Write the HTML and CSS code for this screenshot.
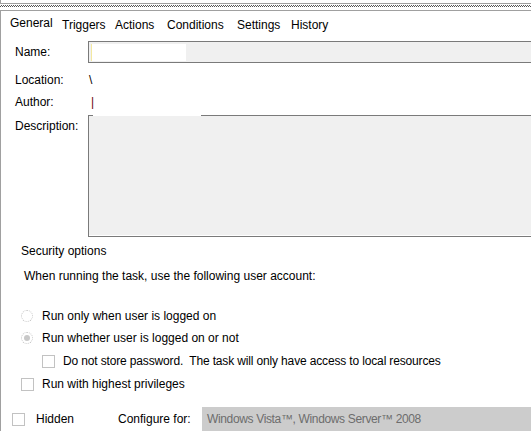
FILE: index.html
```html
<!DOCTYPE html>
<html>
<head>
<meta charset="utf-8">
<link rel="stylesheet" href="styles.css">
</head>
<body>
<div class="splitter">
  <div class="sp-a"></div>
  <div class="sp-b"></div>
  <div class="sp-c"></div>
  <div class="sp-d"></div>
  <div class="sp-e"></div>
</div>
<div class="panel">
  <div class="tabs">
    <div class="tab tab-active">General</div>
    <div class="tab t2">Triggers</div>
    <div class="tab t3">Actions</div>
    <div class="tab t4">Conditions</div>
    <div class="tab t5">Settings</div>
    <div class="tab t6">History</div>
  </div>
  <div class="form">
    <div class="row row-name">
      <div class="label">Name:</div>
      <div class="namebox"><div class="redact"></div></div>
    </div>
    <div class="row row-loc">
      <div class="label">Location:</div>
      <div class="value">\</div>
    </div>
    <div class="row row-author">
      <div class="label">Author:</div>
      <div class="value author">|</div>
    </div>
    <div class="row row-desc">
      <div class="label desc-label">Description:</div>
      <div class="descbox"></div>
    </div>
  </div>
  <div class="security">
    <div class="sec-title">Security options</div>
    <div class="sec-account">When running the task, use the following user account:</div>
    <div class="opt opt-r1"><span class="radio"></span><span>Run only when user is logged on</span></div>
    <div class="opt opt-r2"><span class="radio radio-on"></span><span>Run whether user is logged on or not</span></div>
    <div class="opt opt-c1"><span class="check"></span><span class="tight">Do not store password.&nbsp; The task will only have access to local resources</span></div>
    <div class="opt opt-c2"><span class="check"></span><span>Run with highest privileges</span></div>
  </div>
  <div class="bottom">
    <span class="check"></span>
    <span class="hidden-label">Hidden</span>
    <span class="cfg-label">Configure for:</span>
    <div class="combo">Windows Vista™, Windows Server™ 2008</div>
  </div>
</div>
</body>
</html>
```

FILE: styles.css
```css
html, body {
  margin: 0;
  padding: 0;
  background: #ffffff;
}
body {
  width: 531px;
  height: 431px;
  overflow: hidden;
  font-family: "Liberation Sans", Arial, sans-serif;
  font-size: 12px;
  line-height: 14px;
  color: #000;
}
.splitter {
  display: flex;
  flex-direction: column;
}
.sp-a {
  height: 3px;
  border-left: 1px solid #a0a0a0;
}
.sp-b {
  height: 1px;
  background: #a0a0a0;
}
.sp-c {
  height: 1px;
}
.sp-d {
  height: 2px;
  background: repeating-conic-gradient(#555 0 25%, #fff 0 50%) 0 0 / 2px 2px;
}
.sp-e {
  height: 3px;
}
.panel {
  border-top: 1px solid #a0a0a0;
  border-left: 1px solid #a0a0a0;
  height: 430px;
}
.tabs {
  display: flex;
  padding-left: 9px;
  padding-top: 5px;
  height: 21px;
}
.tab {
  padding-top: 2px;
  white-space: nowrap;
  flex: none;
}
.tab-active {
  padding-top: 0;
  width: 52px;
}
.t2 { width: 53px; }
.t3 { width: 52px; }
.t4 { width: 70px; }
.t5 { width: 54px; }
.form {
  padding-left: 14px;
  display: flex;
  flex-direction: column;
}
.row {
  display: flex;
  align-items: center;
}
.label {
  width: 73px;
  flex: none;
}
.row-name {
  margin-top: 4px;
  height: 22px;
}
.namebox {
  flex: none;
  box-sizing: border-box;
  width: 460px;
  height: 22px;
  border: 1px solid #7a7a7a;
  background: #f0f0f0;
  padding: 2px 0 0 2px;
}
.redact {
  width: 95px;
  height: 17px;
  background: #fff;
  border-left: 1px solid #f3e8a0;
  box-sizing: border-box;
}
.row-loc {
  margin-top: 10px;
}
.value {
  padding-left: 1px;
}
.author {
  color: #6a0010;
  padding-left: 3px;
}
.row-author {
  margin-top: 8px;
}
.row-desc {
  margin-top: 6px;
  align-items: flex-start;
}
.desc-label {
  padding-top: 4px;
}
.descbox {
  flex: none;
  box-sizing: border-box;
  width: 460px;
  height: 122px;
  border: 1px solid #7a7a7a;
  border-top: none;
  background:
    linear-gradient(to right, #7a7a7a 0 4px, #ffffff 4px 112px, #7a7a7a 112px) top left / 100% 1px no-repeat,
    #f0f0f0;
  box-shadow: inset 0 -1px 0 #ffffff;
}
.security {
  display: flex;
  flex-direction: column;
  padding-left: 20px;
}
.sec-title {
  margin-top: 7px;
}
.sec-account {
  margin-top: 11px;
  padding-left: 3px;
}
.opt {
  display: flex;
  align-items: center;
  height: 14px;
  white-space: nowrap;
}
.opt-r1 { margin-top: 26px; }
.opt-r2 { margin-top: 8px; }
.opt-c1 { margin-top: 9px; padding-left: 21px; }
.opt-c2 { margin-top: 9px; }
.tight {
  letter-spacing: -0.15px;
}
.radio {
  box-sizing: border-box;
  width: 12px;
  height: 12px;
  border: 1px dotted #c4c4c4;
  border-radius: 50%;
  margin-right: 9px;
  flex: none;
  display: flex;
  align-items: center;
  justify-content: center;
}
.radio-on::after {
  content: "";
  width: 6px;
  height: 6px;
  border-radius: 50%;
  background: #c8c8c8;
}
.check {
  box-sizing: border-box;
  width: 13px;
  height: 13px;
  border: 1px solid #c2c2c2;
  background: #fff;
  margin-right: 8px;
  flex: none;
}
.bottom {
  display: flex;
  align-items: center;
  margin-top: 16px;
  padding-left: 11px;
  height: 24px;
}
.bottom .check {
  margin-right: 11px;
}
.hidden-label {
  flex: none;
  width: 82px;
}
.cfg-label {
  flex: none;
  width: 84px;
}
.combo {
  flex: none;
  width: 340px;
  height: 24px;
  background: #cccccc;
  color: #6d6d6d;
  padding-left: 5px;
  line-height: 24px;
  box-sizing: border-box;
  white-space: nowrap;
  letter-spacing: -0.35px;
}
```
